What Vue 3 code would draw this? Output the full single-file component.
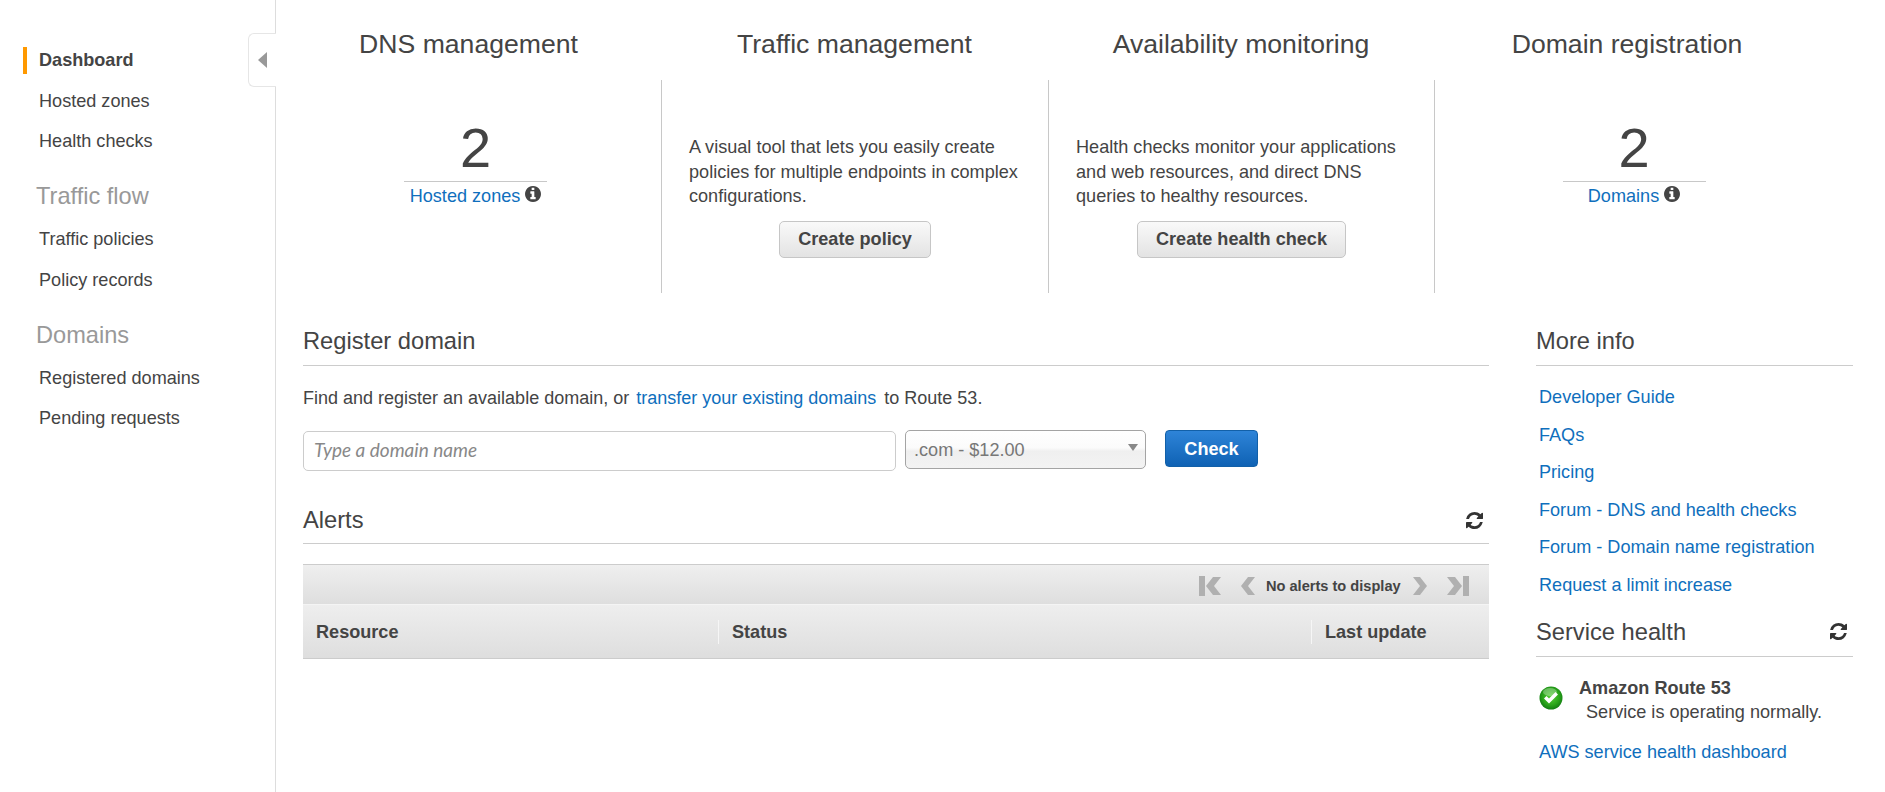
<template>
  <div class="page">
    <aside class="sidebar">
      <button class="collapse" aria-label="Collapse navigation"><span class="collapse-arrow"></span></button>
      <nav class="nav">
        <div v-for="group in navGroups" :key="group.title" class="nav-group">
          <div v-if="group.title !== 'top'" class="nav-title">{{ group.title }}</div>
          <a v-for="item in group.items" :key="item" class="nav-item" :class="{ active: item === 'Dashboard' }">{{ item }}</a>
        </div>
      </nav>
    </aside>

    <main class="main">
      <section class="summary">
        <div class="col first">
          <h2>DNS management</h2>
          <div class="col-body">
            <div class="stat">
              <div class="stat-num">2</div>
              <div class="stat-label">
                <a class="link">Hosted zones</a>
                <svg class="info" viewBox="128 128 1536 1536"><path :d="infoPath" /></svg>
              </div>
            </div>
          </div>
        </div>
        <div class="col">
          <h2>Traffic management</h2>
          <div class="col-body divided">
            <p>A visual tool that lets you easily create policies for multiple endpoints in complex configurations.</p>
            <div class="btn-row"><button class="btn">Create policy</button></div>
          </div>
        </div>
        <div class="col">
          <h2>Availability monitoring</h2>
          <div class="col-body divided">
            <p>Health checks monitor your applications and web resources, and direct DNS queries to healthy resources.</p>
            <div class="btn-row"><button class="btn">Create health check</button></div>
          </div>
        </div>
        <div class="col">
          <h2>Domain registration</h2>
          <div class="col-body divided plain">
            <div class="stat">
              <div class="stat-num">2</div>
              <div class="stat-label">
                <a class="link">Domains</a>
                <svg class="info" viewBox="128 128 1536 1536"><path :d="infoPath" /></svg>
              </div>
            </div>
          </div>
        </div>
      </section>

      <section class="lower">
        <div class="left">
          <h3 class="section-head">Register domain</h3>
          <p class="register-text">
            Find and register an available domain, or
            <a class="link transfer">transfer your existing domains</a>
            to Route 53.
          </p>
          <div class="register-form">
            <input class="domain-input" type="text" placeholder="Type a domain name" />
            <div class="tld-select">
              <span>.com - $12.00</span>
              <i class="tld-arrow"></i>
            </div>
            <button class="btn-primary">Check</button>
          </div>

          <h3 class="section-head alerts-head">
            Alerts
            <svg class="refresh" viewBox="128 128 1536 1536"><path :d="refreshPath" /></svg>
          </h3>
          <div class="table">
            <div class="pager">
              <svg class="pg first-pg" viewBox="0 0 22 20">
                <rect x="0" y="0" width="6" height="20" />
                <path d="M14 1 L7 10 L14 19 L22 19 L15 10 L22 1 Z" />
              </svg>
              <svg class="pg prev-pg" viewBox="0 0 15 20">
                <path d="M8 1 L1 10 L8 19 L15 19 L8 10 L15 1 Z" />
              </svg>
              <span class="pager-text">No alerts to display</span>
              <svg class="pg next-pg" viewBox="0 0 15 20">
                <path d="M7 1 L14 10 L7 19 L0 19 L7 10 L0 1 Z" />
              </svg>
              <svg class="pg last-pg" viewBox="0 0 22 20">
                <path d="M8 1 L15 10 L8 19 L0 19 L7 10 L0 1 Z" />
                <rect x="16" y="0" width="6" height="20" />
              </svg>
            </div>
            <div class="table-head">
              <div class="th th-resource">Resource</div>
              <div class="th th-status">Status</div>
              <div class="th th-update">Last update</div>
            </div>
          </div>
        </div>

        <div class="right">
          <h3 class="section-head">More info</h3>
          <ul class="info-links">
            <li v-for="l in infoLinks" :key="l"><a class="link">{{ l }}</a></li>
          </ul>
          <h3 class="section-head health-head">
            Service health
            <svg class="refresh" viewBox="128 128 1536 1536"><path :d="refreshPath" /></svg>
          </h3>
          <div class="health">
            <svg class="ok" viewBox="0 0 24 24">
              <defs>
                <radialGradient id="okFill" cx="50%" cy="45%" r="60%">
                  <stop offset="0%" stop-color="#58cf38" />
                  <stop offset="60%" stop-color="#2aa51a" />
                  <stop offset="100%" stop-color="#0c7310" />
                </radialGradient>
              </defs>
              <circle cx="12" cy="12" r="11.5" fill="url(#okFill)" />
              <ellipse cx="11" cy="6" rx="7" ry="4" fill="#fff" opacity="0.3" />
              <path d="M5 12.5 L10 17.5 L19 8.5 L16.5 6 L10 12.5 L7.5 10 Z" fill="#fff" />
            </svg>
            <div class="health-text">
              <div class="health-name">Amazon Route 53</div>
              <div class="health-status">Service is operating normally.</div>
            </div>
          </div>
          <a class="link health-link">AWS service health dashboard</a>
        </div>
      </section>
    </main>
  </div>
</template>

<script setup>
const navGroups = [
  { title: "top", items: ["Dashboard", "Hosted zones", "Health checks"] },
  { title: "Traffic flow", items: ["Traffic policies", "Policy records"] },
  { title: "Domains", items: ["Registered domains", "Pending requests"] },
];

const infoLinks = [
  "Developer Guide",
  "FAQs",
  "Pricing",
  "Forum - DNS and health checks",
  "Forum - Domain name registration",
  "Request a limit increase",
];

const infoPath =
  "M1152 1376v-160q0-14-9-23t-23-9h-96v-512q0-14-9-23t-23-9h-320q-14 0-23 9t-9 23v160q0 14 9 23t23 9h96v320h-96q-14 0-23 9t-9 23v160q0 14 9 23t23 9h448q14 0 23-9t9-23zm-128-896v-160q0-14-9-23t-23-9h-192q-14 0-23 9t-9 23v160q0 14 9 23t23 9h192q14 0 23-9t9-23zm640 416q0 209-103 385.5t-279.5 279.5-385.5 103-385.5-103-279.5-279.5-103-385.5 103-385.5 279.5-279.5 385.5-103 385.5 103 279.5 279.5 103 385.5z";

const refreshPath =
  "M1639 1056q0 5-1 7-64 268-268 434.5t-478 166.5q-146 0-282.5-55t-243.5-157l-129 129q-19 19-45 19t-45-19-19-45v-448q0-26 19-45t45-19h448q26 0 45 19t19 45-19 45l-137 137q71 66 161 102t187 36q134 0 250-65t186-179q11-17 53-117 8-23 30-23h192q13 0 22.5 9.5t9.5 22.5zm25-800v448q0 26-19 45t-45 19h-448q-26 0-45-19t-19-45 19-45l138-138q-148-137-349-137-134 0-250 65t-186 179q-11 17-53 117-8 23-30 23h-199q-13 0-22.5-9.5t-9.5-22.5v-7q65-268 270-434.5t480-166.5q146 0 284 55.5t245 156.5l130-129q19-19 45-19t45 19 19 45z";
</script>

<style>
html,
body {
  margin: 0;
  background: #fff;
}
</style>

<style scoped>
.page {
  display: flex;
  min-height: 792px;
  overflow: hidden;
  font-family: "Liberation Sans", Arial, sans-serif;
  font-size: 18.1px;
  color: #444;
}

/* Sidebar */
.sidebar {
  position: relative;
  width: 275px;
  flex: none;
  border-right: 1px solid #ddd;
  padding-top: 47px;
  box-sizing: content-box;
}

.collapse {
  position: absolute;
  top: 33px;
  right: -1px;
  width: 28px;
  height: 54px;
  box-sizing: border-box;
  padding: 0;
  background: #fff;
  border: 1px solid #e6e6e6;
  border-right: none;
  border-radius: 6px 0 0 6px;
  display: flex;
  align-items: center;
  justify-content: center;
}

.collapse-arrow {
  width: 0;
  height: 0;
  border-top: 8px solid transparent;
  border-bottom: 8px solid transparent;
  border-right: 9px solid #999;
}

.nav-group {
  margin-bottom: 27px;
}

.nav-title {
  margin-left: 36px;
  font-size: 23.6px;
  line-height: 28px;
  color: #999;
  margin-bottom: 16px;
}

.nav-item {
  display: block;
  height: 27px;
  line-height: 27px;
  margin-bottom: 13.5px;
  margin-left: 23px;
  padding-left: 16px;
  color: #444;
}

.nav-item.active {
  font-weight: bold;
  border-left: 4px solid #f90;
  padding-left: 12px;
}

/* Top summary */
.main {
  flex: 1;
  min-width: 0;
}

.summary {
  display: grid;
  grid-template-columns: 385px 387px 386px 386px;
  height: 293px;
}

h2 {
  margin: 0;
  height: 80px;
  line-height: 88px;
  font-size: 26.6px;
  font-weight: normal;
  text-align: center;
  color: #444;
}

.col-body {
  height: 213px;
  box-sizing: border-box;
  padding-left: 14px;
}

.col-body.divided {
  border-left: 1px solid #c8c8c8;
  padding: 0 20px 0 27px;
}

.col-body.divided.plain {
  padding: 0 0 0 13px;
}

.col-body p {
  margin: 0;
  padding-top: 55px;
  line-height: 24.6px;
}

.btn-row {
  display: flex;
  justify-content: center;
  margin-top: 12px;
  margin-left: -7px;
}

.btn {
  height: 37px;
  padding: 0 18px;
  border: 1px solid #c6c6c6;
  border-radius: 5px;
  background: linear-gradient(#f9f9f9, #e3e3e3);
  font: bold 18.1px "Liberation Sans", Arial, sans-serif;
  color: #444;
}

.stat {
  width: 143px;
  margin: 0 auto;
  text-align: center;
  padding-top: 35px;
}

.stat-num {
  font-size: 56px;
  line-height: 66px;
  border-bottom: 1px solid #c8c8c8;
  color: #444;
}

.stat-label {
  line-height: 28px;
  white-space: nowrap;
}

.link {
  color: #0f6fbd;
}

.info {
  width: 16px;
  height: 16px;
  margin-left: 5px;
  fill: #444;
  vertical-align: 0;
}

/* Lower area */
.lower {
  display: flex;
  gap: 47px;
  padding-left: 27px;
}

.left {
  width: 1186px;
  flex: none;
}

.right {
  width: 317px;
  flex: none;
}

.section-head {
  display: flex;
  justify-content: space-between;
  align-items: center;
  margin: 34px 0 0;
  padding: 0 6px 10px 0;
  height: 28px;
  box-sizing: content-box;
  line-height: 28px;
  font-size: 23.7px;
  font-weight: normal;
  color: #444;
  border-bottom: 1px solid #ccc;
}

.refresh {
  width: 17px;
  height: 17px;
  fill: #333;
}

.register-text {
  margin: 20px 0 20px;
  font-size: 18px;
  line-height: 24px;
}

.transfer {
  margin: 0 3px 0 2px;
}

.register-form {
  display: flex;
  align-items: flex-start;
  height: 41px;
}

.domain-input {
  width: 593px;
  height: 40px;
  margin-top: 1px;
  margin-right: 9px;
  padding: 0 10px 3px;
  box-sizing: border-box;
  border: 1px solid #ccc;
  border-radius: 5px;
  font: italic 19px "Lato", sans-serif;
  color: #444;
  outline: none;
}

.domain-input::placeholder {
  color: #888;
}

.tld-select {
  position: relative;
  width: 241px;
  height: 39px;
  box-sizing: border-box;
  padding-left: 8px;
  border: 1px solid #a4a4a4;
  border-radius: 5px;
  background: linear-gradient(#fff 0%, #fbfbfb 45%, #efefef 55%, #f3f3f3 100%);
  line-height: 38px;
  color: #777;
  margin-right: 19px;
}

.tld-arrow {
  position: absolute;
  right: 7px;
  top: 13px;
  width: 0;
  height: 0;
  border-left: 5.5px solid transparent;
  border-right: 5.5px solid transparent;
  border-top: 7px solid #888;
}

.btn-primary {
  width: 93px;
  height: 37px;
  padding: 1px 0 0;
  border: 1px solid #1260a8;
  border-radius: 4px;
  background: linear-gradient(#2e84d8, #0f62b4);
  color: #fff;
  font: bold 18.1px "Liberation Sans", Arial, sans-serif;
}

.alerts-head {
  margin-top: 34px;
  padding-top: 1px;
  padding-bottom: 9px;
}

.table {
  margin-top: 20px;
}

.pager {
  display: flex;
  align-items: center;
  height: 41px;
  box-sizing: border-box;
  padding-top: 3px;
  border-top: 1px solid #ccc;
  border-bottom: 1px solid #f4f4f4;
  background: linear-gradient(#efefef, #dedede);
  padding-left: 896px;
}

.pg {
  flex: none;
  height: 20px;
  fill: #b0b0b0;
}

.first-pg {
  width: 22px;
  margin-right: 19px;
}

.prev-pg {
  width: 15px;
  margin-right: 11px;
}

.pager-text {
  font-size: 14.6px;
  font-weight: bold;
  margin-right: 12px;
  white-space: nowrap;
}

.next-pg {
  width: 15px;
  margin-right: 19px;
}

.last-pg {
  width: 22px;
}

.table-head {
  display: flex;
  align-items: center;
  height: 54px;
  box-sizing: border-box;
  border-bottom: 1px solid #ccc;
  background: linear-gradient(#eee, #dedede);
}

.th {
  height: 24px;
  line-height: 24px;
  font-weight: bold;
  box-sizing: border-box;
}

.th-resource {
  width: 415px;
  padding-left: 13px;
}

.th-status {
  width: 593px;
  padding-left: 13px;
  border-left: 1px solid #f6f6f6;
}

.th-update {
  flex: 1;
  padding-left: 13px;
  border-left: 1px solid #f6f6f6;
}

.info-links {
  list-style: none;
  margin: 19px 0 0;
  padding: 0 0 0 3px;
}

.info-links li {
  height: 24px;
  line-height: 24px;
  margin-bottom: 13.5px;
}

.health-head {
  margin-top: 21px;
}

.health {
  display: flex;
  margin-top: 19px;
  padding-left: 3px;
}

.ok {
  flex: none;
  width: 24px;
  height: 24px;
  margin-top: 10px;
  margin-right: 16px;
}

.health-text {
  line-height: 24px;
}

.health-name {
  font-weight: bold;
}

.health-status {
  margin-left: 7px;
}

.health-link {
  display: block;
  margin: 16px 0 0 3px;
  line-height: 24px;
}
</style>
